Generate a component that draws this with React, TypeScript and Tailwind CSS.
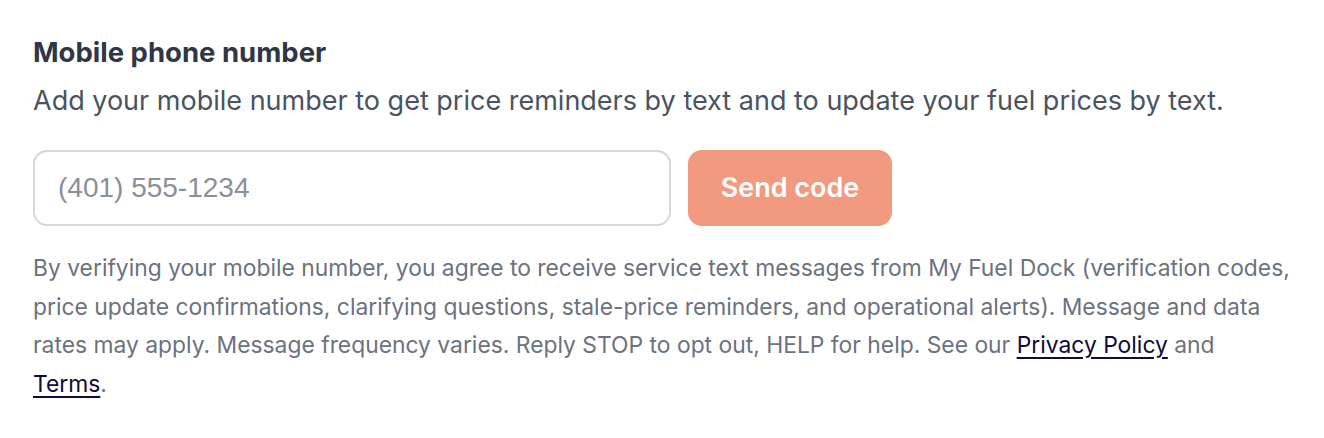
export default function App() {
  return (
    <div className="min-h-screen bg-white font-['Inter','Noto_Sans',sans-serif]">
      <div className="pl-[33px] pr-6 pt-[34px]">
        <h2 className="text-[27.5px] leading-[36px] font-bold text-[#2f3747]">
          Mobile phone number
        </h2>
        <p className="mt-[13px] text-[27px] leading-[36px] text-[#4a5361]">
          Add your mobile number to get price reminders by text and to update your fuel prices by text.
        </p>

        <form className="mt-[31px] flex items-center gap-[17px]" onSubmit={(e) => e.preventDefault()}>
          <input
            type="tel"
            placeholder="(401) 555-1234"
            className="h-[76px] w-[638px] rounded-[14px] border-2 border-[#d4d7dd] bg-white px-[23px] text-[28px] text-[#2f3747] font-['Liberation_Sans',Arial,sans-serif] placeholder:text-[#8a9099] outline-none"
          />
          <button
            type="submit"
            className="h-[76px] w-[204px] rounded-[14px] bg-[#f19a80] text-[27px] font-semibold text-white"
          >
            Send code
          </button>
        </form>

        <p className="mt-[23px] text-[22.85px] leading-[38.5px] text-[#6b7280] max-w-[1259px]">
          By verifying your mobile number, you agree to receive service text messages from My Fuel Dock (verification codes, price update confirmations, clarifying questions, stale-price reminders, and operational alerts). Message and data rates may apply. Message frequency varies. Reply STOP to opt out, HELP for help. See our{' '}
          <a href="#" className="text-[#0d0c3a] underline underline-offset-[4px]">Privacy Policy</a> and{' '}
          <a href="#" className="text-[#0d0c3a] underline underline-offset-[4px]">Terms</a>.
        </p>
      </div>
    </div>
  );
}
